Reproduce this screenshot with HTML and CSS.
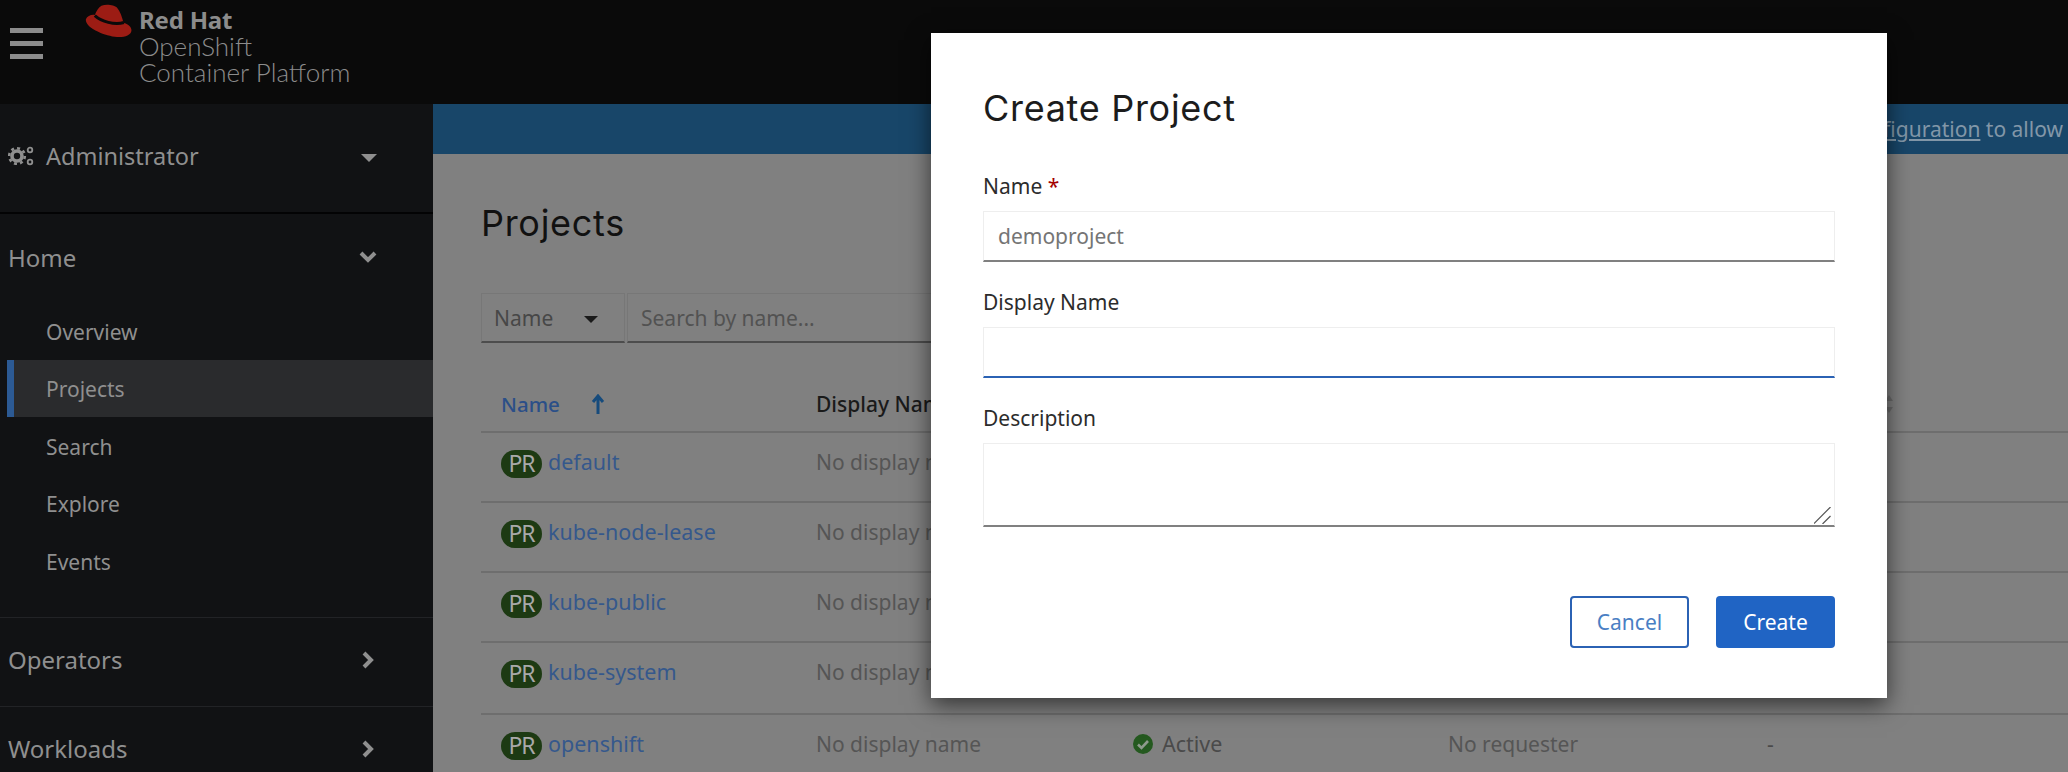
FILE: index.html
```html
<!DOCTYPE html>
<html lang="en">
<head>
    <meta charset="UTF-8">
    <meta name="viewport" content="width=device-width, initial-scale=1.0">
    <title>Create Project - OpenShift Container Platform</title>
    <link rel="stylesheet" href="styles.css">
</head>
<body>
    <header class="masthead">
        <div class="burger"><span></span><span></span><span></span></div>
        <svg class="hat" viewBox="250 0 150 115">
            <path fill="#9c1c14" d="M258 55C262 45 275 40 285 42C290 30 295 20 305 14C320 8 345 12 352 20C362 32 368 50 372 66C385 70 397 78 396 90C394 105 370 112 345 108C310 103 255 80 258 55Z"/>
            <path fill="none" stroke="#0a0a0a" stroke-width="9" d="M285 44C305 62 345 74 373 65"/>
        </svg>
        <div class="brand">
            <b>Red Hat</b>
            <span>OpenShift</span>
            <span>Container Platform</span>
        </div>
    </header>

    <div class="shell">
        <nav class="sidebar">
            <div class="perspective">
                <svg class="cogs" viewBox="0 0 26 20" fill="none" stroke="#8f8f8f">
                    <circle cx="9" cy="10" r="5" stroke-width="3.6"/>
                    <circle cx="9" cy="10" r="7.8" stroke-width="2.6" stroke-dasharray="3 3.1"/>
                    <circle cx="22" cy="4" r="2.3" stroke-width="1.8"/>
                    <circle cx="22" cy="16" r="2.3" stroke-width="1.8"/>
                </svg>
                <span>Administrator</span>
                <i class="caret"></i>
            </div>
            <div class="group">
                <span>Home</span>
                <svg class="chev" viewBox="0 0 20 20"><path d="M3 6l7 7 7-7"/></svg>
            </div>
            <a class="sub">Overview</a>
            <a class="sub current">Projects</a>
            <a class="sub">Search</a>
            <a class="sub">Explore</a>
            <a class="sub">Events</a>
            <div class="group next">
                <span>Operators</span>
                <svg class="chev" viewBox="0 0 20 20"><path d="M6 3l7 7-7 7"/></svg>
            </div>
            <div class="group next">
                <span>Workloads</span>
                <svg class="chev" viewBox="0 0 20 20"><path d="M6 3l7 7-7 7"/></svg>
            </div>
        </nav>

        <main class="content">
            <div class="banner"><span><u>cluster OAuth configuration</u> to allow</span></div>
            <h1>Projects</h1>
            <div class="filters">
                <div class="filter-type">Name <i class="caret dark"></i></div>
                <div class="filter-search">Search by name...</div>
            </div>
            <div class="row head">
                <div class="sorted">Name
                    <svg class="arrow" viewBox="0 0 14 20"><path d="M7 20V3M2 8l5-6 5 6"/></svg>
                </div>
                <div>Display Name</div>
                <div>Status</div>
                <div>Requester</div>
                <div class="created">Created
                    <svg class="sort" viewBox="0 0 10 18"><path d="M5 0l4 6H1zM5 18l-4-6h8z"/></svg>
                </div>
            </div>
            <div class="row"><div><b class="pr">PR</b><a>default</a></div><div class="muted">No display name</div></div>
            <div class="row"><div><b class="pr">PR</b><a>kube-node-lease</a></div><div class="muted">No display name</div></div>
            <div class="row"><div><b class="pr">PR</b><a>kube-public</a></div><div class="muted">No display name</div></div>
            <div class="row tall"><div><b class="pr">PR</b><a>kube-system</a></div><div class="muted">No display name</div></div>
            <div class="row"><div><b class="pr">PR</b><a>openshift</a></div><div class="muted">No display name</div><div class="status"><svg viewBox="0 0 20 20"><circle cx="10" cy="10" r="10"/><path d="M5 10.5l3.5 3.5 6.5-7"/></svg>Active</div><div class="muted">No requester</div><div>-</div></div>
        </main>
    </div>

    <div class="modal">
        <h2>Create Project</h2>
        <label class="field-label">Name <em>*</em></label>
        <input class="field" type="text" value="demoproject">
        <label class="field-label">Display Name</label>
        <input class="field focus" type="text">
        <label class="field-label">Description</label>
        <div class="area-wrap">
            <textarea class="field area"></textarea>
            <svg class="grip" viewBox="0 0 17 17"><path d="M0 16.5L16.5 0M8.5 17L16.5 9"/></svg>
        </div>
        <div class="actions">
            <button class="btn cancel">Cancel</button>
            <button class="btn create">Create</button>
        </div>
    </div>
</body>
</html>
```

FILE: styles.css
```css
* {
    box-sizing: border-box;
}
html, body {
    height: 100%;
}
body {
    margin: 0;
    height: 772px;
    overflow: hidden;
    background: #808080;
    font-family: "Noto Sans", Arial, sans-serif;
    font-size: 20px;
    position: relative;
}

/* masthead */
.masthead {
    height: 104px;
    background: #0a0a0a;
    display: flex;
    align-items: flex-start;
}
.burger {
    width: 33px;
    margin: 28px 0 0 10px;
    display: flex;
    flex-direction: column;
    gap: 8px;
}
.burger span {
    height: 5px;
    background: #8c8c8c;
}
.hat {
    width: 50px;
    height: 38px;
    margin: 1px 0 0 40px;
}
.brand {
    margin: 7px 0 0 6px;
    display: flex;
    flex-direction: column;
    color: #8c8c8c;
    font-family: "Lato", Arial, sans-serif;
    font-size: 26px;
    line-height: 26px;
    font-weight: 300;
}
.brand b {
    font-family: "Noto Sans", Arial, sans-serif;
    font-size: 24px;
    font-weight: 700;
    letter-spacing: -0.2px;
}

.shell {
    display: flex;
    height: 668px;
}

/* sidebar */
.sidebar {
    width: 433px;
    flex: none;
    background: #111214;
    color: #8f8f8f;
}
.perspective {
    height: 110px;
    padding: 0 56px 4px 8px;
    border-bottom: 2px solid #030304;
    display: flex;
    align-items: center;
    font-size: 23.5px;
}
.cogs {
    width: 26px;
    height: 20px;
    margin-right: 12px;
}
.perspective .caret {
    margin: 4px 0 0 auto;
}
.caret {
    display: block;
    border-left: 8px solid transparent;
    border-right: 8px solid transparent;
    border-top: 8px solid #8f8f8f;
}
.group {
    height: 88px;
    padding: 0 56px 2px 8px;
    display: flex;
    align-items: center;
    justify-content: space-between;
    font-size: 24px;
}
.group.next {
    border-top: 1px solid #222326;
    height: 89px;
    padding-bottom: 4px;
}
.sub + .group {
    margin-top: 27px;
}
.chev {
    width: 20px;
    height: 20px;
    margin-right: -1px;
}
.chev path {
    fill: none;
    stroke: #8f8f8f;
    stroke-width: 4;
}
.sub {
    height: 57.5px;
    padding: 2px 0 0 46px;
    display: flex;
    align-items: center;
    font-size: 21px;
}
.sub.current {
    margin-left: 7px;
    padding-left: 32px;
    background: #2a2b2d;
    border-left: 7px solid #2c5a94;
}

/* main page behind the dialog */
.content {
    flex: 1;
    min-width: 0;
}
.banner {
    height: 50px;
    background: #184669;
    color: #8297a8;
    display: flex;
    align-items: center;
    justify-content: flex-end;
    padding-right: 5px;
    font-size: 21px;
    white-space: nowrap;
}
h1 {
    margin: 0;
    padding: 45px 0 0 48px;
    height: 139px;
    font-family: "Inter", Arial, sans-serif;
    font-size: 36px;
    letter-spacing: 0.7px;
    line-height: 48px;
    font-weight: 400;
    color: #111;
}
.filters {
    margin-left: 48px;
    width: 800px;
    height: 50px;
    display: flex;
    font-size: 21px;
}
.filter-type {
    width: 144px;
    padding-left: 12px;
    margin-right: 2px;
    display: flex;
    align-items: center;
    gap: 31px;
    color: #474747;
    border: 1px solid #777;
    border-bottom: 2px solid #4d4d4d;
}
.caret.dark {
    border-left-width: 7px;
    border-right-width: 7px;
    border-top: 7px solid #1a1a1a;
    margin-top: 3px;
}
.filter-search {
    flex: 1;
    padding-left: 13px;
    display: flex;
    align-items: center;
    color: #525252;
    border: 1px solid #777;
    border-bottom: 2px solid #4d4d4d;
}
.row {
    margin-left: 48px;
    height: 70px;
    padding: 14px 0 0 20px;
    display: grid;
    grid-template-columns: 315px 317px 315px 319px 1fr;
    border-bottom: 2px solid #6e6e6e;
    color: #4a4a4a;
    font-size: 21px;
    line-height: 30px;
}
.row.tall {
    height: 72px;
}
.row.head {
    height: 90px;
    padding-top: 46px;
    color: #1a1a1a;
    font-weight: 500;
}
.sorted {
    color: #2b4f88;
    font-size: 20.5px;
    display: flex;
    align-items: center;
    align-self: start;
    gap: 31px;
}
.arrow {
    width: 14px;
    height: 20px;
}
.arrow path {
    fill: none;
    stroke: #164b7c;
    stroke-width: 3;
}
.created {
    display: flex;
    align-items: center;
    align-self: start;
    gap: 38px;
}
.sort {
    width: 10px;
    height: 18px;
    fill: #6a6a6a;
}
.pr {
    display: inline-block;
    width: 41px;
    height: 28px;
    margin-right: 6px;
    border-radius: 14px;
    background: #1d3a13;
    color: #a9a9a9;
    font-weight: 400;
    font-size: 23px;
    letter-spacing: -1px;
    line-height: 27px;
    text-align: center;
    vertical-align: middle;
}
.row a {
    color: #35588c;
    font-size: 21.5px;
}
.muted {
    color: #555;
}
.status {
    display: flex;
    align-items: center;
    align-self: start;
    gap: 9px;
    font-size: 21.5px;
}
.status svg {
    width: 20px;
    height: 20px;
}
.status circle {
    fill: #24591f;
}
.status path {
    fill: none;
    stroke: #8e9a8c;
    stroke-width: 2.6;
}

/* dialog */
.modal {
    position: absolute;
    left: 931px;
    top: 33px;
    width: 956px;
    height: 665px;
    padding: 0 52px;
    background: #fff;
    box-shadow: 0 7px 22px rgba(0, 0, 0, 0.6);
    display: flex;
    flex-direction: column;
    color: #222;
}
h2 {
    margin: 0;
    padding-top: 51px;
    height: 138px;
    font-family: "Inter", Arial, sans-serif;
    font-size: 36px;
    letter-spacing: 0.7px;
    line-height: 48px;
    font-weight: 400;
    color: #1c1c1c;
}
.field-label {
    height: 40px;
    line-height: 30px;
    font-size: 21px;
    color: #2c2c2c;
}
.field-label em {
    color: #a30000;
    font-style: normal;
}
.field {
    display: block;
    width: 100%;
    height: 51px;
    padding: 0 14px;
    border: 1px solid #eeeeee;
    border-bottom: 2px solid #808080;
    outline: none;
    font-family: inherit;
    font-size: 21px;
    color: #757575;
    background: #fff;
    border-radius: 0;
}
.field.focus {
    border-bottom-color: #2b62b4;
}
input.field + .field-label {
    margin-top: 25px;
}
.area-wrap {
    position: relative;
}
.area {
    height: 84px;
    padding-top: 8px;
    resize: none;
}
.grip {
    position: absolute;
    right: 4px;
    bottom: 3px;
    width: 17px;
    height: 17px;
}
.grip path {
    fill: none;
    stroke: #555;
    stroke-width: 1.2;
}
.actions {
    margin-top: 69px;
    display: flex;
    justify-content: flex-end;
    gap: 27px;
}
.btn {
    width: 119px;
    height: 52px;
    border-radius: 4px;
    font-family: inherit;
    font-size: 21px;
    cursor: pointer;
}
.cancel {
    background: #fff;
    color: #4a7fc4;
    border: 2px solid #2b62b4;
}
.create {
    background: #2064c4;
    color: #fff;
    border: none;
}
```
